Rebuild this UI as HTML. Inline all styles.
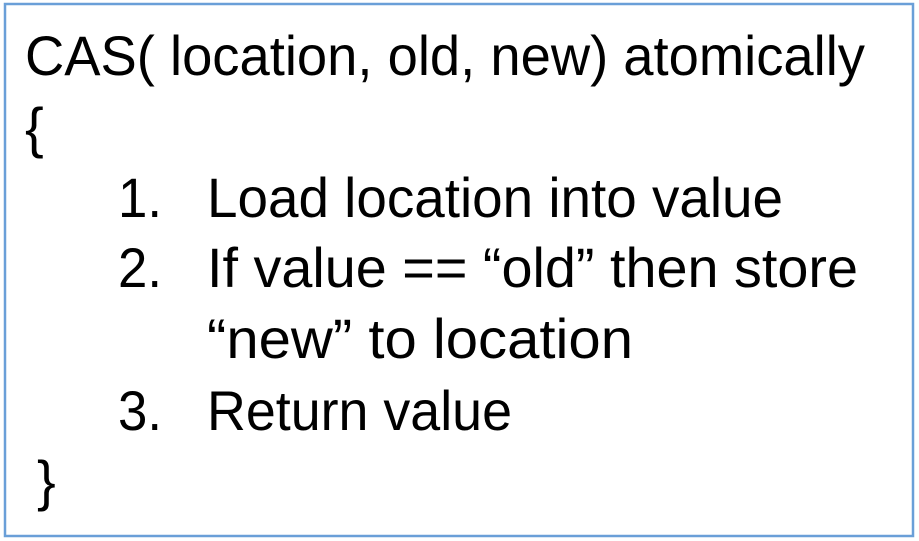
<!DOCTYPE html>
<html><head><meta charset="utf-8"><style>
html,body{margin:0;padding:0;background:#fff;width:919px;height:541px;overflow:hidden}
svg{display:block}
text{font-family:"Liberation Sans",sans-serif;font-size:56px;fill:#000}
</style></head><body>
<svg width="919" height="541" xmlns="http://www.w3.org/2000/svg">
<rect x="5" y="4" width="908" height="532" fill="#fff" stroke="#6a9fd8" stroke-width="2.5"/>
<text x="25" y="75" textLength="840" lengthAdjust="spacingAndGlyphs">CAS( location, old, new) atomically</text>
<text x="25" y="147">{</text>
<text x="118" y="217" textLength="44" lengthAdjust="spacingAndGlyphs">1.</text>
<text x="207" y="217" textLength="576" lengthAdjust="spacingAndGlyphs">Load location into value</text>
<text x="118" y="287" textLength="44" lengthAdjust="spacingAndGlyphs">2.</text>
<text x="207" y="287" textLength="651" lengthAdjust="spacingAndGlyphs">If value == “old” then store</text>
<text x="207" y="358" textLength="426" lengthAdjust="spacingAndGlyphs">“new” to location</text>
<text x="118" y="430" textLength="44" lengthAdjust="spacingAndGlyphs">3.</text>
<text x="207" y="430" textLength="305" lengthAdjust="spacingAndGlyphs">Return value</text>
<text x="37" y="500">}</text>
</svg>
</body></html>
